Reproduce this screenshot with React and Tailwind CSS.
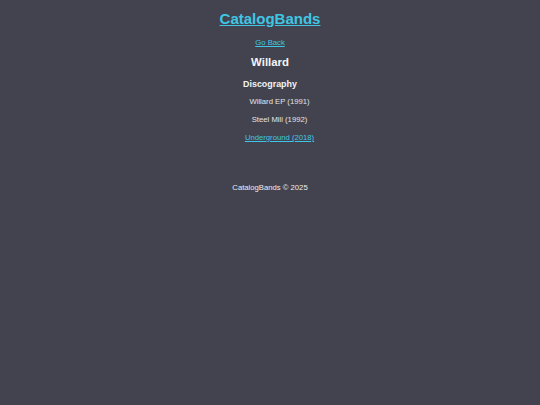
import React from 'react';

const albums = [
  { title: 'Willard EP (1991)' },
  { title: 'Steel Mill (1992)' },
  { title: 'Underground (2018)', link: true },
];

const App = () => {
  return (
    <div className="min-h-screen bg-[#43434f] text-white font-['Liberation_Sans',Arial,sans-serif] text-center">
      {/* Header */}
      <header className="pt-[8px]">
        <a href="#" className="block text-[15px] leading-[21px] font-bold text-[#3fc6e4] underline">
          CatalogBands
        </a>
        <a href="#" className="block mt-[9px] text-[7.7px] leading-[10px] text-[#3fc6e4] underline">
          Go Back
        </a>
      </header>

      {/* Band */}
      <main>
        <h2 className="mt-[7px] text-[11.4px] leading-[14px] font-bold text-[#f4f4f6]">Willard</h2>
        <h3 className="mt-[9px] text-[8.9px] leading-[12px] font-bold text-[#f4f4f6]">Discography</h3>
        <ul className="mt-[7px] pl-[19px] flex flex-col gap-[8px] text-[7.7px] leading-[10px] text-[#e4e4e8]">
          {albums.map((a) => (
            <li key={a.title}>
              {a.link ? (
                <a href="#" className="text-[#3fc6e4] underline">{a.title}</a>
              ) : (
                a.title
              )}
            </li>
          ))}
        </ul>
      </main>

      {/* Footer */}
      <footer className="mt-[40px]">
        <p className="text-[7.7px] leading-[10px] text-[#ececf0]">CatalogBands &copy; 2025</p>
      </footer>
    </div>
  );
};

export default App;
